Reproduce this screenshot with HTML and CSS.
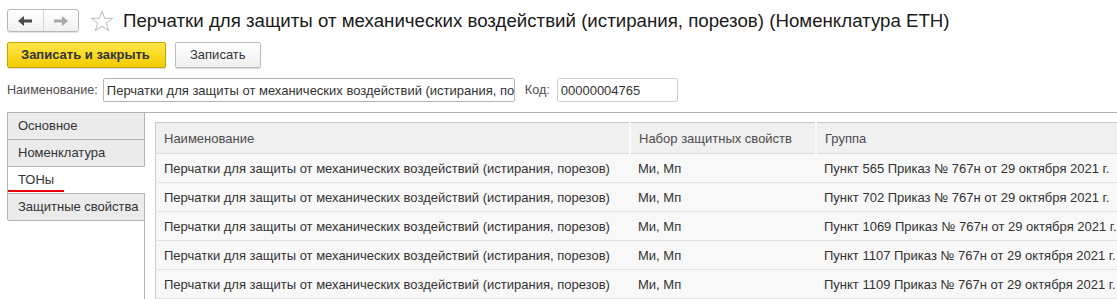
FILE: index.html
```html
<!DOCTYPE html>
<html>

<head>
    <meta charset="utf-8">
    <title>Перчатки для защиты от механических воздействий</title>
    <link rel="stylesheet" href="styles.css">
</head>

<body>
    <div class="topbar">
        <div class="nav">
            <div class="navbtn">
                <svg width="14" height="10" viewBox="0 0 14 10"><path d="M0 5 L6 0 L6 3.5 L14 3.5 L14 6.5 L6 6.5 L6 10 Z" fill="#4a4a4a"/></svg>
            </div>
            <div class="navbtn">
                <svg width="14" height="10" viewBox="0 0 14 10"><path d="M14 5 L8 0 L8 3.5 L0 3.5 L0 6.5 L8 6.5 L8 10 Z" fill="#a8a8a8"/></svg>
            </div>
        </div>
        <svg class="star" width="24" height="22" viewBox="0 0 24 22"><path d="M12 1 L14.7 8.2 L22.5 8.4 L16.3 13.1 L18.6 20.6 L12 16.2 L5.4 20.6 L7.7 13.1 L1.5 8.4 L9.3 8.2 Z" fill="none" stroke="#c4c4c4" stroke-width="1.1" stroke-linejoin="round"/></svg>
        <h1>Перчатки для защиты от механических воздействий (истирания, порезов) (Номенклатура ETH)</h1>
    </div>

    <div class="cmdbar">
        <div class="btn btn-main">Записать и закрыть</div>
        <div class="btn">Записать</div>
    </div>

    <div class="fields">
        <label>Наименование:</label>
        <div class="field field-name">Перчатки для защиты от механических воздействий (истирания, порезов)</div>
        <label class="lbl-code">Код:</label>
        <div class="field field-code">00000004765</div>
    </div>

    <div class="tabs-area">
        <div class="tab-list">
            <div class="tab">Основное</div>
            <div class="tab">Номенклатура</div>
            <div class="tab active"><span>ТОНы</span></div>
            <div class="tab last">Защитные свойства</div>
            <div class="tab-fill"></div>
        </div>
        <div class="tab-page">
            <table class="grid">
                <tr>
                    <th class="c1">Наименование</th>
                    <th class="c2">Набор защитных свойств</th>
                    <th class="c3">Группа</th>
                </tr>
                <tr>
                    <td>Перчатки для защиты от механических воздействий (истирания, порезов)</td>
                    <td>Ми, Мп</td>
                    <td>Пункт 565 Приказ № 767н от 29 октября 2021 г.</td>
                </tr>
                <tr>
                    <td>Перчатки для защиты от механических воздействий (истирания, порезов)</td>
                    <td>Ми, Мп</td>
                    <td>Пункт 702 Приказ № 767н от 29 октября 2021 г.</td>
                </tr>
                <tr>
                    <td>Перчатки для защиты от механических воздействий (истирания, порезов)</td>
                    <td>Ми, Мп</td>
                    <td>Пункт 1069 Приказ № 767н от 29 октября 2021 г.</td>
                </tr>
                <tr>
                    <td>Перчатки для защиты от механических воздействий (истирания, порезов)</td>
                    <td>Ми, Мп</td>
                    <td>Пункт 1107 Приказ № 767н от 29 октября 2021 г.</td>
                </tr>
                <tr>
                    <td>Перчатки для защиты от механических воздействий (истирания, порезов)</td>
                    <td>Ми, Мп</td>
                    <td>Пункт 1109 Приказ № 767н от 29 октября 2021 г.</td>
                </tr>
            </table>
        </div>
    </div>
</body>

</html>
```

FILE: styles.css
```css
body {
    margin: 0;
    background-color: white;
    font-family: "Liberation Sans", Arial, sans-serif;
    font-size: 13px;
    color: #333;
    overflow: hidden;
    height: 299px;
}

.topbar {
    display: flex;
    align-items: center;
    height: 23px;
    padding: 9px 7px 0 7px;
}

.nav {
    display: flex;
    width: 70px;
    height: 21px;
    border: 1px solid #b8b8b8;
    border-radius: 3px;
    background: linear-gradient(#ffffff, #f0f0f0);
    box-shadow: 0 1px 1px rgba(0, 0, 0, 0.12);
}

.navbtn {
    flex: 1;
    display: flex;
    align-items: center;
    justify-content: center;
}

.navbtn + .navbtn {
    border-left: 1px solid #d6d6d6;
}

.star {
    margin-left: 11px;
}

h1 {
    margin: 0 0 0 9px;
    font-weight: normal;
    font-size: 18.7px;
    color: #1a1a1a;
    white-space: nowrap;
}

.cmdbar {
    display: flex;
    gap: 9px;
    padding: 10px 7px 0 7px;
}

.btn {
    height: 24px;
    line-height: 24px;
    padding: 0 14px;
    border: 1px solid #bdbdbd;
    border-radius: 2px;
    background: linear-gradient(#ffffff, #efefef);
    box-shadow: 0 1px 1px rgba(0, 0, 0, 0.15);
    color: #333;
}

.btn-main {
    width: 131px;
    padding: 0 13px;
    font-weight: bold;
    border-color: #c2a400;
    background: linear-gradient(#ffe74a, #f3cb00);
    color: #333;
}

.fields {
    display: flex;
    align-items: center;
    padding: 10px 7px 0 7px;
}

label {
    color: #4d4d4d;
    margin-right: 5px;
    font-size: 12.6px;
}

.field {
    height: 24px;
    line-height: 23px;
    border: 1px solid #b5b5b5;
    border-radius: 2px;
    padding: 0 3px;
    overflow: hidden;
    white-space: nowrap;
    box-sizing: border-box;
}

.field-name {
    width: 412px;
}

.lbl-code {
    margin-left: 10px;
    margin-right: 7px;
}

.field-code {
    width: 121px;
    border-color: #cfcfcf;
}

.tabs-area {
    display: flex;
    margin-top: 10px;
    height: 187px;
}

.tab-list {
    display: flex;
    flex-direction: column;
    flex-shrink: 0;
    width: 138px;
    padding-left: 7px;
}

.tab {
    height: 26px;
    line-height: 26px;
    padding-left: 10px;
    background-color: #ebebeb;
    border: 1px solid #b3b3b3;
    border-bottom: 0;
    white-space: nowrap;
}

.tab.last {
    border-bottom: 1px solid #b3b3b3;
    border-radius: 0 0 0 2px;
}

.tab.active {
    background-color: white;
    border-right-color: white;
}

.tab.active span {
    display: inline-block;
    line-height: 20px;
    border-bottom: 2px solid #e80000;
    padding: 0 10px 0 10px;
    margin-left: -10px;
}

.tab-fill {
    flex: 1;
    border-right: 1px solid #b3b3b3;
}

.tab-page {
    flex: 1;
    min-width: 0;
    border-top: 1px solid #b3b3b3;
    padding: 9px 0 0 10px;
}

.grid {
    border-collapse: collapse;
    width: 1000px;
    table-layout: fixed;
    border-left: 1px solid #c9c9c9;
    border-top: 1px solid #c9c9c9;
}

.grid th {
    height: 30px;
    text-align: left;
    font-weight: normal;
    color: #4d4d4d;
    background-color: #f0f0f0;
    padding: 0 0 0 8px;
    border-bottom: 1px solid #dcdcdc;
}

.grid th + th {
    border-left: 2px solid #fafafa;
}

.grid td {
    height: 28px;
    padding: 0 0 0 8px;
    background-color: #f8f8f8;
    border-bottom: 1px solid #e2e2e2;
    white-space: nowrap;
    color: #333;
}

.c1 {
    width: 465px;
}

.c2 {
    width: 176px;
}
```
